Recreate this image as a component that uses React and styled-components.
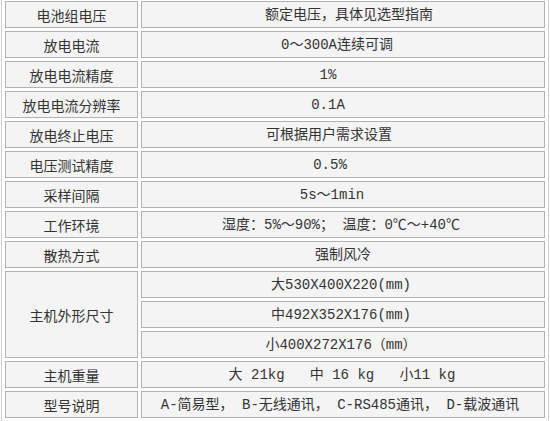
import React from 'react';
import styled, { createGlobalStyle } from 'styled-components';

const GlobalStyle = createGlobalStyle`
  html, body {
    margin: 0;
    padding: 0;
    background: #ffffff;
    overflow: hidden;
  }
`;

const SpecTable = styled.table`
  margin: -3px 0 0 1px;
  width: 548px;
  border: 1px solid #cfcfcf;
  border-collapse: separate;
  border-spacing: 3px;
  background: #ffffff;
  font-family: "Liberation Mono", "Noto Sans CJK SC", monospace;
  font-size: 14px;
  color: #333333;
`;

const Row = styled.tr`
  height: 27px;
`;

const Cell = styled.td`
  box-sizing: border-box;
  height: 27px;
  padding: 0;
  border: 1px solid #b2b2b2;
  background: #f4f4f4;
  text-align: center;
  vertical-align: middle;
  white-space: pre;
  line-height: 16px;
`;

const LabelCell = styled(Cell)`
  width: 133px;
  font-family: "Noto Sans CJK SC", sans-serif;
`;

const ValueCell = styled(Cell)`
  width: 404px;
  padding-left: ${p => (p.$shift > 0 ? p.$shift * 2 : 0)}px;
  padding-right: ${p => (p.$shift < 0 ? -p.$shift * 2 : 0)}px;
`;

const rows = [
  { label: '电池组电压', value: '额定电压，具体见选型指南', shift: 6 },
  { label: '放电电流', value: '0～300A连续可调', shift: -6 },
  { label: '放电电流精度', value: '1%', shift: -15 },
  { label: '放电电流分辨率', value: '0.1A', shift: -15 },
  { label: '放电终止电压', value: '可根据用户需求设置', shift: -14 },
  { label: '电压测试精度', value: '0.5%', shift: -13 },
  { label: '采样间隔', value: '5s～1min', shift: -11 },
  { label: '工作环境', value: '湿度：5%～90%； 温度：0℃～+40℃', shift: -2 },
  { label: '散热方式', value: '强制风冷', shift: 0 },
];

const sizes = ['大530X400X220(mm)', '中492X352X176(mm)', '小400X272X176（mm）'];

function App() {
  return (
    <>
      <GlobalStyle />
      <SpecTable>
        <tbody>
          {rows.map(r => (
            <Row key={r.label}>
              <LabelCell>{r.label}</LabelCell>
              <ValueCell $shift={r.shift}>{r.value}</ValueCell>
            </Row>
          ))}
          {sizes.map((s, i) => (
            <Row key={s}>
              {i === 0 && <LabelCell rowSpan={3}>主机外形尺寸</LabelCell>}
              <ValueCell $shift={-2}>{s}</ValueCell>
            </Row>
          ))}
          <Row>
            <LabelCell>主机重量</LabelCell>
            <ValueCell $shift={-1}>大 21kg   中 16 kg   小11 kg</ValueCell>
          </Row>
          <Row>
            <LabelCell>型号说明</LabelCell>
            <ValueCell $shift={-3}>A-简易型， B-无线通讯， C-RS485通讯， D-载波通讯</ValueCell>
          </Row>
        </tbody>
      </SpecTable>
    </>
  );
}

export default App;
